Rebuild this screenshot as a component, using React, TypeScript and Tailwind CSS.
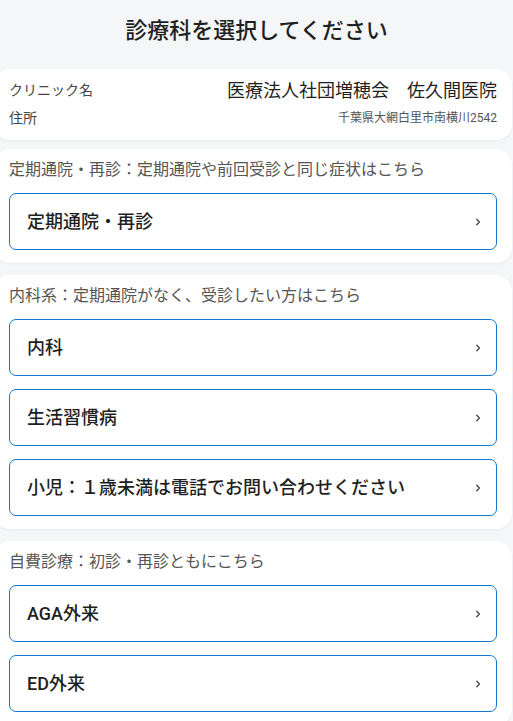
import React from "react";

type Section = {
    label: string;
    items: string[];
};

const sections: Section[] = [
    {
        label: "定期通院・再診：定期通院や前回受診と同じ症状はこちら",
        items: ["定期通院・再診"],
    },
    {
        label: "内科系：定期通院がなく、受診したい方はこちら",
        items: ["内科", "生活習慣病", "小児：１歳未満は電話でお問い合わせください"],
    },
    {
        label: "自費診療：初診・再診ともにこちら",
        items: ["AGA外来", "ED外来"],
    },
];

function Chevron() {
    return (
        <svg width="8" height="10" viewBox="0 0 8 10" fill="none" className="shrink-0">
            <path d="M2.8 2.2 L5.4 5 L2.8 7.8" stroke="#4a4a4a" strokeWidth="1.4" strokeLinecap="round" strokeLinejoin="round" />
        </svg>
    );
}

export default function App() {
    return (
        <div
            className="min-h-[721px] bg-[#f5f6f8] overflow-hidden"
            style={{ fontFamily: "Roboto, 'Noto Sans CJK JP', sans-serif" }}
        >
            {/* Page title */}
            <h1 className="h-[69px] flex items-center justify-center text-[22px] font-medium text-[#1f1f1f] pb-[9px]">
                診療科を選択してください
            </h1>

            {/* Clinic info */}
            <div className="-ml-[6px] mr-[1px] mb-[9px] px-[15px] pt-[10px] pb-[11px] bg-white rounded-2xl shadow-[0_1px_3px_rgba(0,0,0,0.05)]">
                <div className="flex items-center justify-between h-[22px]">
                    <span className="text-[14px] text-[#444]">クリニック名</span>
                    <span className="text-[18px] text-[#1f1f1f]">医療法人社団増穂会　佐久間医院</span>
                </div>
                <div className="flex items-center justify-between h-[22px] mt-[6px]">
                    <span className="text-[14px] text-[#444]">住所</span>
                    <span className="text-[12px] text-[#555]">千葉県大網白里市南横川2542</span>
                </div>
            </div>

            <div className="flex flex-col gap-[12px]">
                {sections.map((section) => (
                    <div
                        key={section.label}
                        className="-ml-[6px] mr-[1px] px-[15px] pt-[9px] pb-[13px] bg-white rounded-2xl shadow-[0_1px_3px_rgba(0,0,0,0.05)]"
                    >
                        <div className="h-[24px] flex items-center text-[16px] text-[#555]">{section.label}</div>
                        <div className="flex flex-col gap-[13px] mt-[11px]">
                            {section.items.map((item) => (
                                <button
                                    key={item}
                                    className="h-[57px] w-full flex items-center justify-between pl-[17px] pr-[14px] border border-[#1277d0] rounded-[7px] bg-white text-left"
                                >
                                    <span className="text-[18px] font-medium text-[#1f1f1f]">{item}</span>
                                    <Chevron />
                                </button>
                            ))}
                        </div>
                    </div>
                ))}
            </div>
        </div>
    );
}
